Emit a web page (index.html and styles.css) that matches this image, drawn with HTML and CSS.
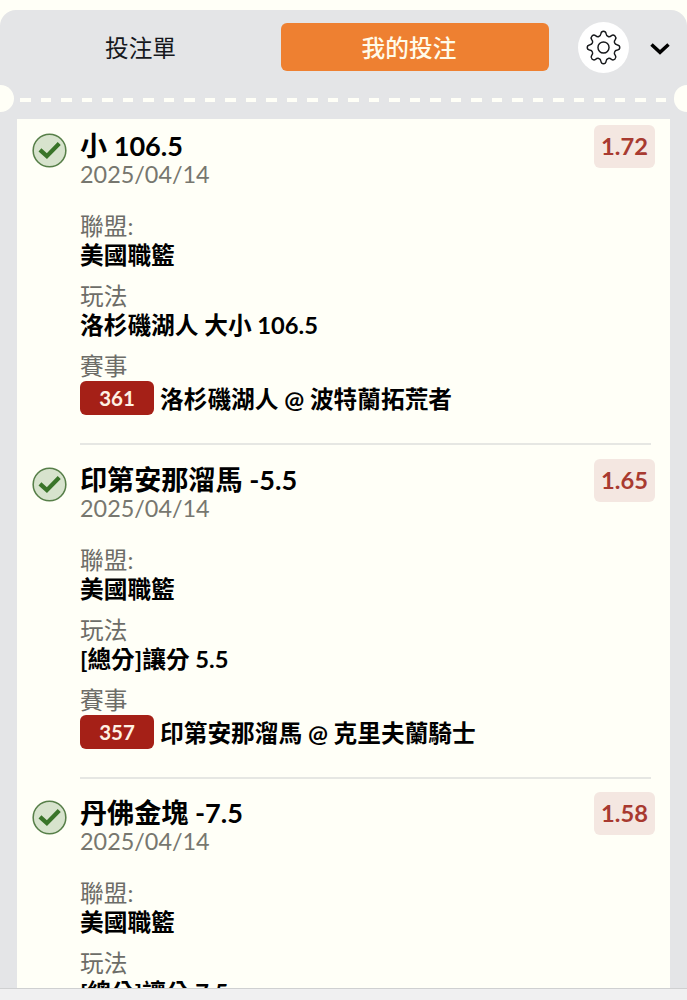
FILE: index.html
```html
<!DOCTYPE html>
<html lang="zh-Hant">

<head>
    <meta charset="UTF-8">
    <meta name="viewport" content="width=device-width, initial-scale=1.0">
    <title>我的投注</title>
    <link rel="stylesheet" href="styles.css">
</head>

<body>
    <div class="bet-slip">
        <header class="slip-header">
            <button class="tab">投注單</button>
            <button class="tab active">我的投注</button>
            <button class="settings-button" aria-label="設定">
                <svg width="35" height="35" viewBox="0 0 36 36">
                    <path d="M15.4 3.6 Q15.8 1.3 18 1.3 Q20.2 1.3 20.6 3.6 Q20.9 6.1 22.8 6.7 Q24.4 7.3 26.2 5.8 Q28 4.5 29.8 6.2 Q31.5 8 30.2 9.8 Q28.7 11.6 29.3 13.2 Q29.9 15.1 32.4 15.4 Q34.7 15.8 34.7 18 Q34.7 20.2 32.4 20.6 Q29.9 20.9 29.3 22.8 Q28.7 24.4 30.2 26.2 Q31.5 28 29.8 29.8 Q28 31.5 26.2 30.2 Q24.4 28.7 22.8 29.3 Q20.9 29.9 20.6 32.4 Q20.2 34.7 18 34.7 Q15.8 34.7 15.4 32.4 Q15.1 29.9 13.2 29.3 Q11.6 28.7 9.8 30.2 Q8 31.5 6.2 29.8 Q4.5 28 5.8 26.2 Q7.3 24.4 6.7 22.8 Q6.1 20.9 3.6 20.6 Q1.3 20.2 1.3 18 Q1.3 15.8 3.6 15.4 Q6.1 15.1 6.7 13.2 Q7.3 11.6 5.8 9.8 Q4.5 8 6.2 6.2 Q8 4.5 9.8 5.8 Q11.6 7.3 13.2 6.7 Q15.1 6.1 15.4 3.6 Z" />
                    <circle cx="18" cy="18" r="5.7" />
                </svg>
            </button>
            <button class="collapse-button" aria-label="收合">
                <svg width="20" height="12" viewBox="0 0 20 12">
                    <path d="M1.5 1.5 L10 9.3 L18.5 1.5" />
                </svg>
            </button>
        </header>

        <div class="perforation">
            <div class="notch notch-left"></div>
            <div class="dashes"></div>
            <div class="notch notch-right"></div>
        </div>

        <main class="bet-list">
            <article class="bet">
                <svg class="status" width="35" height="35" viewBox="0 0 36 36">
                    <circle cx="18" cy="18" r="16.8" />
                    <path d="M8.2 17.3 L15.3 23.8 L28 10.8" />
                </svg>
                <div class="bet-body">
                    <div class="bet-top">
                        <div>
                            <h2 class="bet-title">小 106.5</h2>
                            <div class="bet-date">2025/04/14</div>
                        </div>
                        <span class="odds">1.72</span>
                    </div>
                    <dl class="details">
                        <dt>聯盟:</dt>
                        <dd>美國職籃</dd>
                        <dt>玩法</dt>
                        <dd>洛杉磯湖人 大小 106.5</dd>
                        <dt>賽事</dt>
                        <dd class="match"><span class="match-id">361</span>洛杉磯湖人 @ 波特蘭拓荒者</dd>
                    </dl>
                </div>
            </article>

            <article class="bet">
                <svg class="status" width="35" height="35" viewBox="0 0 36 36">
                    <circle cx="18" cy="18" r="16.8" />
                    <path d="M8.2 17.3 L15.3 23.8 L28 10.8" />
                </svg>
                <div class="bet-body">
                    <div class="bet-top">
                        <div>
                            <h2 class="bet-title">印第安那溜馬 -5.5</h2>
                            <div class="bet-date">2025/04/14</div>
                        </div>
                        <span class="odds">1.65</span>
                    </div>
                    <dl class="details">
                        <dt>聯盟:</dt>
                        <dd>美國職籃</dd>
                        <dt>玩法</dt>
                        <dd>[總分]讓分 5.5</dd>
                        <dt>賽事</dt>
                        <dd class="match"><span class="match-id">357</span>印第安那溜馬 @ 克里夫蘭騎士</dd>
                    </dl>
                </div>
            </article>

            <article class="bet">
                <svg class="status" width="35" height="35" viewBox="0 0 36 36">
                    <circle cx="18" cy="18" r="16.8" />
                    <path d="M8.2 17.3 L15.3 23.8 L28 10.8" />
                </svg>
                <div class="bet-body">
                    <div class="bet-top">
                        <div>
                            <h2 class="bet-title">丹佛金塊 -7.5</h2>
                            <div class="bet-date">2025/04/14</div>
                        </div>
                        <span class="odds">1.58</span>
                    </div>
                    <dl class="details">
                        <dt>聯盟:</dt>
                        <dd>美國職籃</dd>
                        <dt>玩法</dt>
                        <dd>[總分]讓分 7.5</dd>
                    </dl>
                </div>
            </article>
        </main>
    </div>
    <footer class="bottom-bar"></footer>
</body>

</html>
```
FILE: styles.css
```css
* {
    box-sizing: border-box;
}

body,
html {
    margin: 0;
    padding: 0;
    height: 100%;
    overflow: hidden;
}

body {
    display: flex;
    flex-direction: column;
    background: #fffff7;
    font-family: Lato, "Noto Sans CJK TC", sans-serif;
    font-size: 23.7px;
    color: #000;
}

button {
    border: none;
    padding: 0;
    background: none;
    font: inherit;
    cursor: pointer;
}

.bet-slip {
    flex: 1;
    min-height: 0;
    margin-top: 10px;
    display: flex;
    flex-direction: column;
    background: #e4e5e7;
    border-radius: 16px 16px 0 0;
    overflow: hidden;
}

.slip-header {
    display: flex;
    align-items: center;
    height: 74px;
    padding-right: 17px;
    flex-shrink: 0;
}

.tab {
    width: 281px;
    height: 48px;
    color: #16181d;
}

.tab.active {
    width: 268px;
    padding-right: 12px;
    background: #ee8031;
    border-radius: 6px;
    color: #fffbe9;
    font-weight: 500;
}

.settings-button {
    display: flex;
    align-items: center;
    justify-content: center;
    width: 51px;
    height: 51px;
    margin-left: 28.5px;
    background: #fff;
    border-radius: 50%;
}

.settings-button svg {
    fill: none;
    stroke: #17191c;
    stroke-width: 1.5;
}

.collapse-button {
    display: flex;
    margin-left: auto;
    padding-top: 3px;
}

.collapse-button path {
    fill: none;
    stroke: #000;
    stroke-width: 3.5;
}

/* Tear line */
.perforation {
    display: flex;
    justify-content: space-between;
    align-items: center;
    height: 27px;
    margin: 1px 0 7px;
    flex-shrink: 0;
}

.notch {
    width: 13.5px;
    height: 27px;
    background: #fffff7;
}

.notch-left {
    border-radius: 0 14px 14px 0;
}

.notch-right {
    border-radius: 14px 0 0 14px;
}

.dashes {
    width: 647px;
    height: 4px;
    margin-top: 3px;
    background: repeating-linear-gradient(90deg, #fffff7 0 10.5px, transparent 10.5px 20.5px);
}

.bet-list {
    flex: 1;
    min-height: 0;
    margin: 0 17px;
    background: #fffff7;
    overflow: hidden;
}

.bet {
    display: flex;
    align-items: flex-start;
    padding: 0 19px 0 15px;
    margin-bottom: 7.5px;
}

.status {
    flex-shrink: 0;
    margin: 14px 13px 0 0;
}

.status circle {
    fill: #d7e3cd;
    stroke: #577f49;
    stroke-width: 1.6;
}

.status path {
    fill: none;
    stroke: #397429;
    stroke-width: 4.4;
}

.bet-body {
    flex: 1;
    height: 326px;
    border-bottom: 2px solid #e6e7e3;
}

.bet-top {
    display: flex;
    justify-content: space-between;
    align-items: flex-start;
    margin-right: -4px;
}

.bet-title {
    margin: 12px 0 0;
    font-size: 27.1px;
    line-height: 30px;
    font-weight: 700;
}

.bet-date {
    font-size: 23.4px;
    line-height: 26px;
    color: #77776f;
}

.odds {
    width: 61px;
    height: 43px;
    margin-top: 6px;
    background: #f4e7e1;
    border-radius: 6px;
    color: #a83a30;
    font-weight: 700;
    line-height: 43px;
    text-align: center;
}

.details {
    margin: 25px 0 0;
    line-height: 29px;
}

.details dt {
    color: #6d6d68;
}

.details dd {
    margin: 0 0 12px;
    font-weight: 700;
}

.details .match {
    display: flex;
    align-items: center;
    height: 34px;
    margin-bottom: 0;
    line-height: 34px;
    padding-top: 2px;
}

.match-id {
    width: 74px;
    margin: -2px 6px 0 0;
    background: #a52017;
    border-radius: 6px;
    color: #fff1e4;
    font-size: 20.5px;
    line-height: 34px;
    text-align: center;
}

.bottom-bar {
    height: 12px;
    background: #f0f0f1;
    border-top: 1px solid #cfd0d1;
}
```
